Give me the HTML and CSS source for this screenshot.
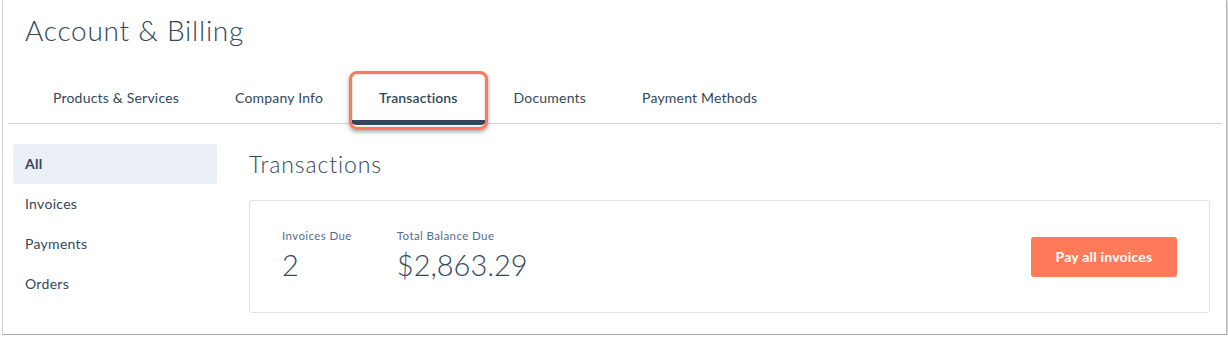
FILE: index.html
```html
<!DOCTYPE html>
<html lang="en">

<head>
  <meta charset="UTF-8">
  <meta name="viewport" content="width=device-width, initial-scale=1.0">
  <title>Account &amp; Billing</title>
  <link rel="stylesheet" href="styles.css">
</head>

<body>
  <div class="window">
    <h1 class="page-title">Account &amp; Billing</h1>

    <nav class="tabs">
      <a class="tab">Products &amp; Services</a>
      <a class="tab">Company Info</a>
      <a class="tab active">Transactions</a>
      <a class="tab">Documents</a>
      <a class="tab">Payment Methods</a>
    </nav>

    <div class="content">
      <ul class="sidebar">
        <li class="side-item selected">All</li>
        <li class="side-item">Invoices</li>
        <li class="side-item">Payments</li>
        <li class="side-item">Orders</li>
      </ul>

      <main class="main">
        <h2 class="section-title">Transactions</h2>

        <div class="card">
          <div class="stats">
            <div class="stat">
              <div class="stat-label">Invoices Due</div>
              <div class="stat-value">2</div>
            </div>
            <div class="stat">
              <div class="stat-label">Total Balance Due</div>
              <div class="stat-value">$2,863.29</div>
            </div>
          </div>
          <button class="button" type="button">Pay all invoices</button>
        </div>
      </main>
    </div>
  </div>
</body>

</html>
```

FILE: styles.css
```css
body {
  font-family: Lato, "Open Sans", sans-serif;
  background-color: #fff;
  color: #33475b;
  margin: 0;
  padding: 0;
}

.window {
  box-sizing: border-box;
  width: 1225px;
  height: 335px;
  margin-left: 2px;
  border-left: 1px solid #d4d4d4;
  border-right: 1px solid #b8b8b8;
  border-bottom: 1px solid #a8a8a8;
  box-shadow: 1px 1px 2px rgba(0, 0, 0, 0.25);
  background-color: #fff;
}

.page-title {
  margin: 0;
  padding: 12px 0 0 22px;
  font-size: 28px;
  line-height: 36px;
  font-weight: 300;
  letter-spacing: 0.75px;
}

.tabs {
  display: flex;
  margin: 25px 4px 0 5px;
  padding-left: 17px;
  border-bottom: 1px solid #cbd6e2;
}

.tab {
  position: relative;
  height: 50px;
  line-height: 50px;
  padding: 0 28px;
  font-size: 14px;
  letter-spacing: 0.2px;
  color: #33475b;
  cursor: pointer;
}

.tab.active {
  font-weight: 600;
  letter-spacing: 0.1px;
}

.tab.active::after {
  content: "";
  position: absolute;
  left: 0;
  right: 0;
  bottom: -2px;
  height: 5px;
  background-color: #33475b;
  border-radius: 0 0 5px 5px;
}

/* annotation box round the active tab */
.tab.active::before {
  content: "";
  position: absolute;
  top: -2px;
  left: -2px;
  right: -2px;
  bottom: -7px;
  border: 3px solid #ff7a59;
  border-radius: 8px;
  box-shadow: 0 2px 4px rgba(0, 0, 0, 0.35), inset 0 0 2px rgba(0, 0, 0, 0.3);
  z-index: 1;
}

.content {
  display: flex;
  padding: 20px 16px 0 10px;
}

.sidebar {
  list-style: none;
  margin: 0;
  padding: 0;
  width: 204px;
  flex-shrink: 0;
}

.side-item {
  height: 40px;
  line-height: 39px;
  padding-left: 12px;
  font-size: 14px;
  letter-spacing: 0.3px;
  border-radius: 3px;
}

.side-item.selected {
  background-color: #eaf0f6;
  font-weight: 700;
}

.main {
  flex: 1;
  margin-left: 32px;
}

.section-title {
  margin: 0;
  font-size: 23px;
  line-height: 40px;
  font-weight: 300;
  letter-spacing: 0.9px;
}

.card {
  display: flex;
  align-items: center;
  justify-content: space-between;
  box-sizing: border-box;
  height: 113px;
  margin-top: 16px;
  padding: 0 32px;
  border: 1px solid #dfe3eb;
  border-radius: 3px;
}

.stats {
  display: flex;
  gap: 45px;
  padding-bottom: 3px;
}

.stat-label {
  font-size: 11.5px;
  line-height: 16px;
  letter-spacing: 0.4px;
  color: #516f90;
}

.stat-value {
  font-size: 29px;
  line-height: 34px;
  font-weight: 300;
  margin-top: 4px;
}

.button {
  width: 146px;
  height: 40px;
  background-color: #ff7a59;
  color: #fff;
  font-family: inherit;
  font-size: 14px;
  font-weight: 700;
  letter-spacing: 0.2px;
  border: none;
  border-radius: 3px;
  cursor: pointer;
}
```
